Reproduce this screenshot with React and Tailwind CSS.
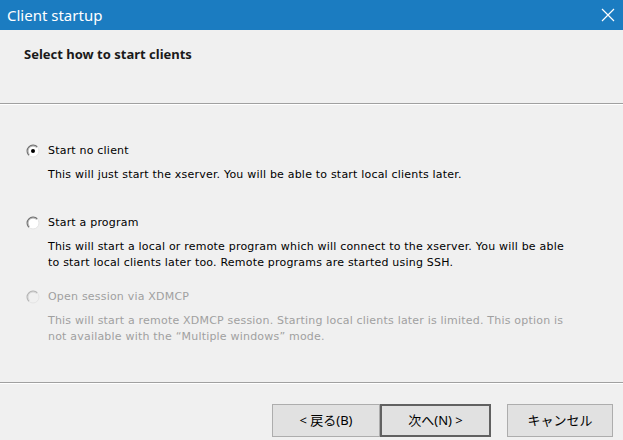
import React, { useState } from "react";

const OPTIONS = [
  {
    id: "none",
    label: "Start no client",
    desc: ["This will just start the xserver. You will be able to start local clients later."],
  },
  {
    id: "program",
    label: "Start a program",
    gap: "mt-[33px]",
    desc: [
      "This will start a local or remote program which will connect to the xserver. You will be able",
      "to start local clients later too. Remote programs are started using SSH.",
    ],
  },
  {
    id: "xdmcp",
    label: "Open session via XDMCP",
    gap: "mt-[19px]",
    disabled: true,
    desc: [
      "This will start a remote XDMCP session. Starting local clients later is limited. This option is",
      "not available with the \u201cMultiple windows\u201d mode.",
    ],
  },
];

function Radio({ checked, disabled }) {
  const dark = disabled ? "#b4b4b4" : "#6e6e6e";
  const mid = disabled ? "#d4d4d4" : "#a8a8a8";
  return (
    <svg width="14" height="14" viewBox="0 0 14 14" className="shrink-0">
      <circle cx="7" cy="7" r="6" fill={disabled ? "#f0f0f0" : "#ffffff"} stroke="#e4e4e4" strokeWidth="1" />
      <path d="M2.76 11.24 A6 6 0 0 1 11.24 2.76" fill="none" stroke={dark} strokeWidth="1.2" />
      <path d="M3.46 10.54 A5 5 0 0 1 10.54 3.46" fill="none" stroke={mid} strokeWidth="1" />
      {checked && <circle cx="7" cy="7" r="2" fill="#000" />}
    </svg>
  );
}

export default function App() {
  const [sel, setSel] = useState("none");
  const ui = { fontFamily: '"Noto Sans", "Noto Sans CJK JP", sans-serif' };
  const body = { fontFamily: '"DejaVu Sans", Verdana, sans-serif' };

  return (
    <div className="w-[623px] h-[440px] bg-[#f0f0f0] flex flex-col overflow-hidden">
      <div className="h-[30px] bg-[#1b7cc1] flex items-center justify-between pl-[7px] pr-[4px] text-white shrink-0">
        <span className="text-[15px] leading-none" style={ui}>Client startup</span>
        <svg width="14" height="14" viewBox="0 0 14 14" className="mr-[4px]">
          <path d="M1 1 L13 13 M13 1 L1 13" stroke="#fff" strokeWidth="1.2" />
        </svg>
      </div>

      <div className="h-[73px] shrink-0 pl-[24px] pt-[15px]">
        <h1 className="text-[13px] font-bold text-[#1a1a1a]" style={ui}>Select how to start clients</h1>
      </div>
      <div className="h-px bg-[#a0a0a0] shrink-0" />
      <div className="h-px bg-white shrink-0" />

      <div className="flex-1 flex flex-col pl-[26px] pt-[39px]">
        {OPTIONS.map((o) => (
          <div key={o.id} className={`${o.gap || ""} ${o.disabled ? "text-[#a0a0a0]" : "text-black"}`} style={body}>
            <label className="flex items-center gap-[8px] h-[14px] text-[11px] tracking-[0.2px]" onClick={() => !o.disabled && setSel(o.id)}>
              <Radio checked={sel === o.id} disabled={o.disabled} />
              <span>{o.label}</span>
            </label>
            <div className="pl-[22px] mt-[9px] text-[11px] leading-[16px] tracking-[0.2px]">
              {o.desc.map((l) => (
                <div key={l} className="whitespace-nowrap">{l}</div>
              ))}
            </div>
          </div>
        ))}
      </div>

      <div className="h-px bg-[#a0a0a0] shrink-0" />
      <div className="h-px bg-white shrink-0" />
      <div className="h-[56px] shrink-0 flex items-start pt-[20px] pl-[272px]" style={ui}>
        <button className="w-[108px] h-[33px] bg-[#e1e1e1] border border-[#adadad] text-[13px] text-black">&lt; 戻る(B)</button>
        <button className="w-[111px] h-[33px] bg-[#e1e1e1] border-2 border-[#616161] text-[13px] text-black">次へ(N) &gt;</button>
        <button className="ml-[16px] w-[106px] h-[33px] bg-[#e1e1e1] border border-[#adadad] text-[13px] text-black">キャンセル</button>
      </div>
    </div>
  );
}
